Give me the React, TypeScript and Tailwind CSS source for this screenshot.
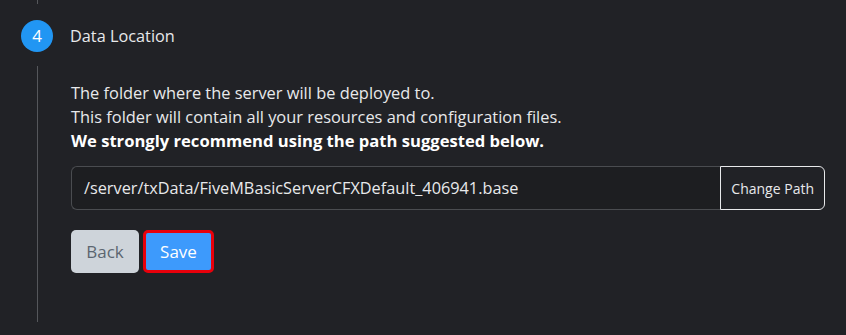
export default function App() {
  return (
    <div className="h-[335px] w-[846px] overflow-hidden bg-[#212226] font-['Open_Sans',sans-serif] text-[#e8e9eb]">
      <div className="ml-[37px] h-[4px] w-px bg-[#55575b]" />

      {/* step header */}
      <div className="mt-[16px] flex items-center">
        <div className="ml-[21px] flex h-[32px] w-[32px] items-center justify-center rounded-full bg-[#2196f3] text-[17px] text-white">
          4
        </div>
        <div className="ml-[17px] text-[16.3px]">Data Location</div>
      </div>

      {/* step body */}
      <div className="mt-[14px] flex">
        <div className="ml-[37px] h-[256px] w-px bg-[#55575b]" />
        <div className="ml-[33px] pt-[15px]">
          <p className="text-[16.4px] leading-[24px]">
            The folder where the server will be deployed to.
            <br />
            This folder will contain all your resources and configuration files.
            <br />
            <strong className="text-[16.6px] font-bold text-white">
              We strongly recommend using the path suggested below.
            </strong>
          </p>

          <div className="mt-[13px] flex h-[44px] w-[754px]">
            <div className="flex flex-1 items-center rounded-l-[6px] border border-r-0 border-[#4a4c50] bg-[#1d1e21] pl-[12px] text-[16.3px] text-[#e8e9eb]">
              /server/txData/FiveMBasicServerCFXDefault_406941.base
            </div>
            <button className="flex items-center rounded-r-[6px] border border-[#e8e9eb] px-[10px] text-[14px] text-[#e8e9eb]">
              Change Path
            </button>
          </div>

          <div className="mt-[20px] flex items-center gap-[4px]">
            <button className="h-[43px] w-[68px] rounded-[5px] bg-[#ced4da] text-[17px] text-[#5c6670]">
              Back
            </button>
            <button className="h-[43px] w-[71px] rounded-[5px] border-[3px] border-[#e8000b] bg-[#3d9afc] text-[17px] text-white">
              Save
            </button>
          </div>
        </div>
      </div>
    </div>
  );
}
